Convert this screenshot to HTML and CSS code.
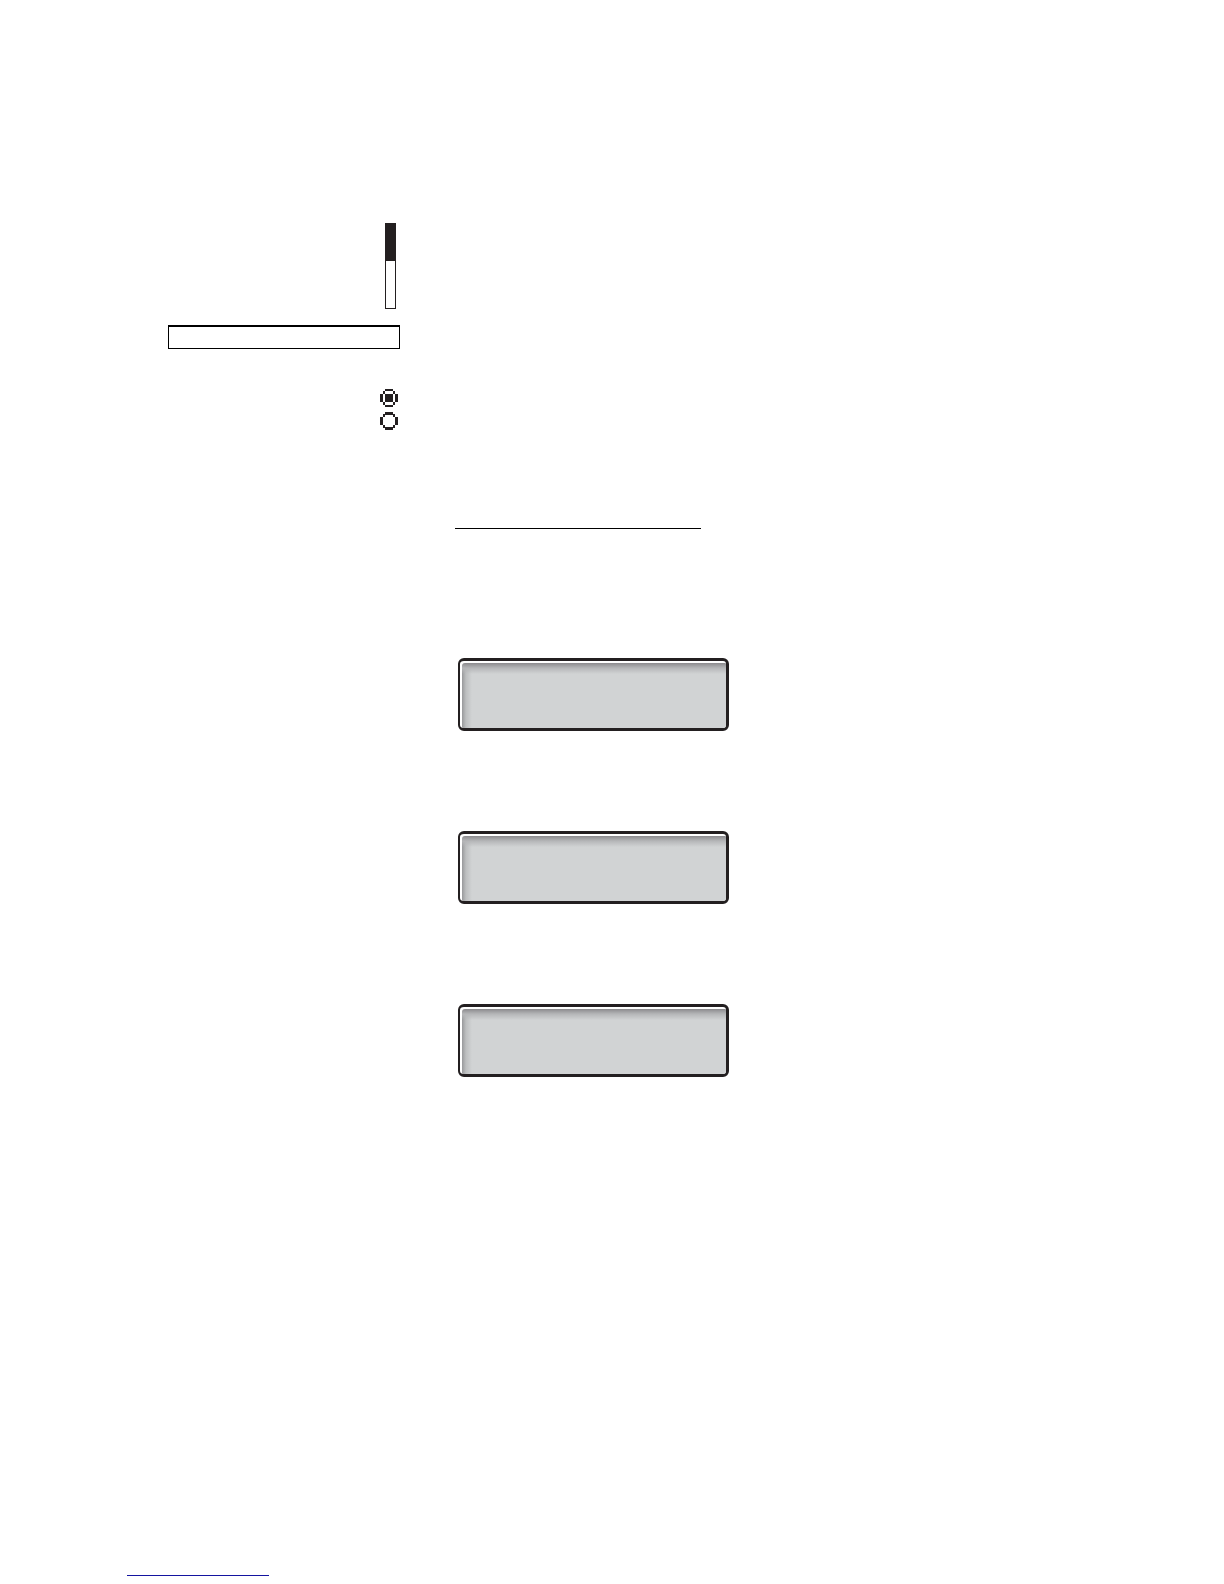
FILE: index.html
```html
<!DOCTYPE html>
<html lang="en">
<head>
  <meta charset="UTF-8">
  <meta name="viewport" content="width=device-width, initial-scale=1.0">
  <title>Display</title>
  <link rel="stylesheet" href="styles.css">
</head>
<body>
  <div class="page">
    <main class="layout">
      <!-- Symbols -->
      <aside class="symbols">
        <div class="scrollbar"><div class="scrollbar-thumb"></div></div>
        <input class="text-box" type="text" aria-label="Text">
        <div class="radios">
          <label class="radio">
            <input type="radio" name="option" aria-label="Selected" checked>
            <svg viewBox="0 0 18 18" shape-rendering="crispEdges">
              <path d="M5 0h8v2h-8zM3 2h2v3h-2zM13 2h2v3h-2zM0 5h3v8h-3zM15 5h3v8h-3zM3 13h2v3h-2zM13 13h2v3h-2zM5 16h8v2h-8z"/>
              <path class="dot" d="M5 5h8v8h-8z"/>
            </svg>
          </label>
          <label class="radio">
            <input type="radio" name="option" aria-label="Not selected">
            <svg viewBox="0 0 18 18" shape-rendering="crispEdges">
              <path d="M5 0h8v3h-8zM3 2h2v3h-2zM13 2h2v3h-2zM0 5h3v8h-3zM15 5h3v8h-3zM3 13h2v3h-2zM13 13h2v3h-2zM5 15h8v3h-8z"/>
              <path class="dot" d="M5 5h8v8h-8z"/>
            </svg>
          </label>
        </div>
      </aside>

      <!-- Displays -->
      <section class="content">
        <hr class="rule">
        <div class="displays">
          <div class="display"><div class="screen"></div></div>
          <div class="display"><div class="screen"></div></div>
          <div class="display"><div class="screen"></div></div>
        </div>
      </section>
    </main>

    <footer class="footer">
      <a class="footer-link" href="#" aria-label="Top"></a>
    </footer>
  </div>
</body>
</html>
```
FILE: styles.css
```css
:root {
  --ink: #231f20;
  --black: #000;
  --screen: #d1d3d4;
  --link: #1414a0;
}
* { box-sizing: border-box; margin: 0; padding: 0; }
body {
  background: #fff;
  color: var(--black);
  font-family: "Liberation Sans", Arial, sans-serif;
}

.page {
  display: flex;
  flex-direction: column;
  justify-content: space-between;
  min-height: 100vh;
  padding: 223px 127px 8px;
}
.layout {
  display: grid;
  grid-template-columns: 273px 1fr;
  column-gap: 55px;
}

/* Symbols */
.symbols {
  display: flex;
  flex-direction: column;
  align-items: flex-end;
}
.scrollbar {
  width: 11px;
  height: 86px;
  margin-right: 4px;
  border: 1px solid var(--ink);
}
.scrollbar-thumb {
  height: 37px;
  background: var(--ink);
}
.text-box {
  width: 232px;
  height: 24px;
  margin-top: 16px;
  padding: 0 4px;
  border: 1px solid var(--black);
  border-top-width: 2px;
  border-radius: 0;
  background: #fff;
}
.radios {
  display: grid;
  gap: 5px;
  margin: 40px 2px 0 0;
}
.radio {
  position: relative;
  width: 18px;
  height: 18px;
}
.radio input {
  position: absolute;
  inset: 0;
  opacity: 0;
}
.radio svg {
  display: block;
  width: 18px;
  height: 18px;
  fill: var(--ink);
}
.dot { display: none; }
.radio input:checked + svg .dot { display: block; }

/* Displays */
.rule {
  width: 246px;
  margin-top: 305px;
  border: 0;
  border-top: 1px solid var(--black);
}
.displays {
  display: grid;
  gap: 100px;
  margin: 129px 0 0 3px;
}
.display {
  width: 271px;
  height: 73px;
  padding: 2px 0 0 2px;
  border: 3px solid var(--ink);
  border-left-width: 2px;
  border-radius: 6px;
  background: #fff;
}
.screen {
  height: 100%;
  border-radius: 3px 1px 3px 1px;
  background:
    linear-gradient(to bottom, #8b8a8d, #b5b6b8 5px, transparent 11px),
    linear-gradient(to right, #98999b, #bdbfc0 4px, transparent 10px),
    var(--screen);
}

.footer-link {
  display: block;
  width: 142px;
  border-bottom: 1px solid var(--link);
}
```
